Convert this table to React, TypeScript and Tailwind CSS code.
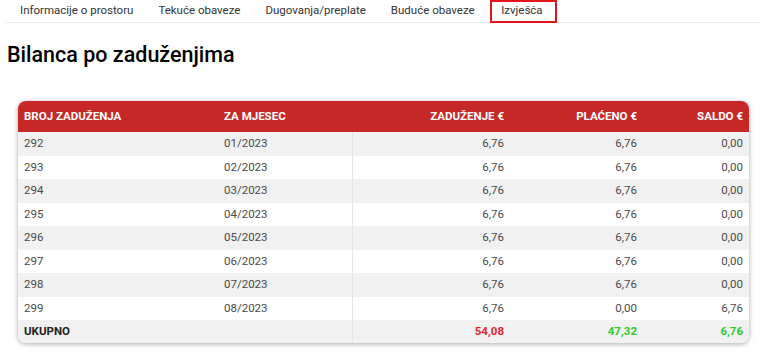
const TABS = ['Informacije o prostoru', 'Tekuće obaveze', 'Dugovanja/preplate', 'Buduće obaveze', 'Izvješća']

const ROWS: [string, string, string, string, string][] = [
  ['292', '01/2023', '6,76', '6,76', '0,00'],
  ['293', '02/2023', '6,76', '6,76', '0,00'],
  ['294', '03/2023', '6,76', '6,76', '0,00'],
  ['295', '04/2023', '6,76', '6,76', '0,00'],
  ['296', '05/2023', '6,76', '6,76', '0,00'],
  ['297', '06/2023', '6,76', '6,76', '0,00'],
  ['298', '07/2023', '6,76', '6,76', '0,00'],
  ['299', '08/2023', '6,76', '0,00', '6,76'],
]

export default function App() {
  return (
    <div className="min-h-[362px] bg-white font-['Roboto',sans-serif] text-[#333]">
      {/* Tabs */}
      <div className="mx-[6px] mr-[8px] flex h-[23px] items-center border-b border-[#ececec] pl-[1.5px]">
        {TABS.map((t, i) => (
          <div
            key={t}
            className={`flex h-[23px] items-center text-[11.5px] ${
              i === TABS.length - 1
                ? 'ml-[3px] border-2 border-[#e3141b] pl-[9px] pr-[12px]'
                : 'px-[12.5px]'
            }`}
          >
            {t}
          </div>
        ))}
      </div>

      <h1 className="ml-[7px] mt-[17px] text-[21.5px] font-medium leading-[30px] text-black">
        Bilanca po zaduženjima
      </h1>

      {/* Card */}
      <div className="ml-[18px] mr-[19px] mt-[31px] overflow-hidden rounded-lg shadow-[0_1px_5px_rgba(0,0,0,0.35)]">
        <table className="w-full table-fixed border-collapse text-[11.5px]">
          <colgroup>
            <col className="w-[200px]" />
            <col className="w-[134px]" />
            <col className="w-[158px]" />
            <col className="w-[133px]" />
            <col />
          </colgroup>
          <thead>
            <tr className="h-[31px] bg-[#c62828] text-white">
              <th className="px-[6px] text-left font-bold">BROJ ZADUŽENJA</th>
              <th className="px-[6px] text-left font-bold">ZA MJESEC</th>
              <th className="px-[6px] text-right font-bold">ZADUŽENJE €</th>
              <th className="px-[6px] text-right font-bold">PLAĆENO €</th>
              <th className="px-[6px] text-right font-bold">SALDO €</th>
            </tr>
          </thead>
          <tbody className="text-[#4a4a4a]">
            {ROWS.map((r, i) => (
              <tr key={r[0]} className={`h-[23.5px] ${i % 2 === 0 ? 'bg-[#f1f1f1]' : 'bg-white'}`}>
                <td className="px-[6px]">{r[0]}</td>
                <td className="border-r border-[#e2e6ea] px-[6px]">{r[1]}</td>
                <td className="px-[6px] text-right">{r[2]}</td>
                <td className="px-[6px] text-right">{r[3]}</td>
                <td className="px-[6px] text-right">{r[4]}</td>
              </tr>
            ))}
            <tr className="h-[22.5px] bg-[#f1f1f1] font-bold">
              <td className="px-[6px] text-[#222]">UKUPNO</td>
              <td className="border-r border-[#e2e6ea] px-[6px]"></td>
              <td className="px-[6px] text-right text-[#e0252b]">54,08</td>
              <td className="px-[6px] text-right text-[#2ecc2e]">47,32</td>
              <td className="px-[6px] text-right text-[#2ecc2e]">6,76</td>
            </tr>
          </tbody>
        </table>
      </div>
    </div>
  )
}
